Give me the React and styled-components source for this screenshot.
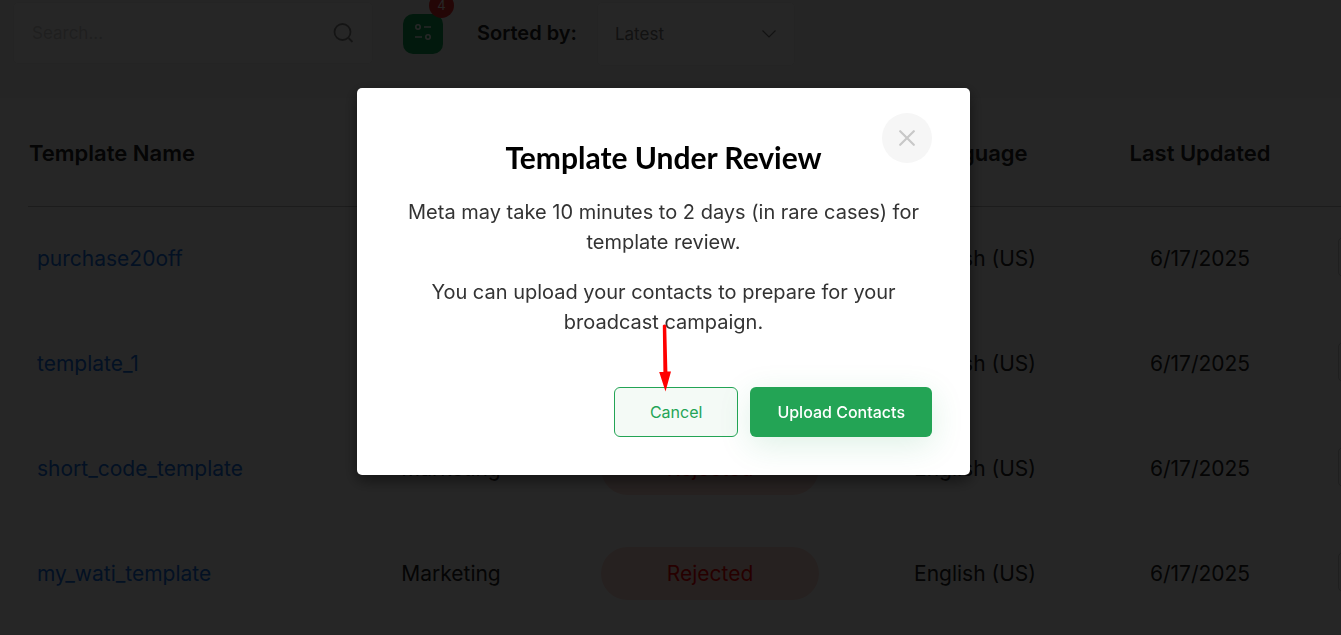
//Estilos
import styled, { createGlobalStyle } from "styled-components";

const templates = [
  { name: "purchase20off" },
  { name: "template_1" },
  { name: "short_code_template", category: "Marketing", status: "Rejected" },
  { name: "my_wati_template", category: "Marketing", status: "Rejected" },
];

const App = () => {
  return (
    <>
      <GlobalStyle />
      <Page>
        <Toolbar>
          <SearchBox>
            <input type="text" placeholder="Search..." aria-label="Search" />
            <svg width="22" height="22" viewBox="0 0 22 22" fill="none">
              <circle cx="10.5" cy="10" r="8" />
              <path d="M16.5 16l4 4" />
            </svg>
          </SearchBox>

          <FilterButton type="button" aria-label="Filters">
            <svg width="18" height="16" viewBox="0 0 18 16" fill="none">
              <circle cx="4" cy="3" r="2.2" />
              <path d="M10 3h7M1 13h7" />
              <circle cx="14" cy="13" r="2.2" />
            </svg>
            <Badge>4</Badge>
          </FilterButton>

          <SortLabel htmlFor="sort">Sorted by:</SortLabel>
          <SelectBox>
            <select id="sort" defaultValue="Latest">
              <option>Latest</option>
            </select>
            <svg width="16" height="10" viewBox="0 0 16 10" fill="none">
              <path d="M1.5 1.5l6.5 6.5 6.5-6.5" />
            </svg>
          </SelectBox>
        </Toolbar>

        <TableCard>
          <Table>
            <colgroup>
              <Col width="317px" />
              <Col width="212px" />
              <Col width="306px" />
              <Col width="224px" />
              <Col width="226px" />
              <Col />
            </colgroup>
            <thead>
              <tr>
                <HeadCell align="left">Template Name</HeadCell>
                <HeadCell />
                <HeadCell />
                <HeadCell>Language</HeadCell>
                <HeadCell>Last Updated</HeadCell>
                <HeadCell />
              </tr>
            </thead>
            <tbody>
              {templates.map((item) => (
                <tr key={item.name}>
                  <Cell align="left">
                    <NameLink href="#">{item.name}</NameLink>
                  </Cell>
                  <Cell>{item.category}</Cell>
                  <Cell>{item.status && <Status>{item.status}</Status>}</Cell>
                  <Cell>English (US)</Cell>
                  <Cell>6/17/2025</Cell>
                  <Cell align="left">
                    <ActionButton type="button" aria-label="Actions" />
                  </Cell>
                </tr>
              ))}
            </tbody>
          </Table>
        </TableCard>
      </Page>

      <Overlay>
        <Modal role="dialog" aria-modal="true" aria-labelledby="modal-title">
          <CloseButton type="button" aria-label="Close">
            <svg width="16" height="16" viewBox="0 0 16 16" fill="none">
              <path d="M1.2 1.2l13.6 13.6M14.8 1.2L1.2 14.8" />
            </svg>
          </CloseButton>
          <h2 id="modal-title">Template Under Review</h2>
          <p>
            Meta may take 10 minutes to 2 days (in rare cases) for template
            review.
          </p>
          <p>
            You can upload your contacts to prepare for your broadcast campaign.
          </p>
          <Actions>
            <Button type="button">
              Cancel
              <Arrow width="14" height="68" viewBox="0 0 14 68">
                <path d="M4.8 1.5Q6.5-.5 8.2 1.5L9.4 47.5H13L7.5 67.5L1.2 48H5.4Z" />
              </Arrow>
            </Button>
            <Button type="button" $primary>
              Upload Contacts
            </Button>
          </Actions>
        </Modal>
      </Overlay>
    </>
  );
};

export default App;

const GlobalStyle = createGlobalStyle`
  * {
    box-sizing: border-box;
  }

  body {
    margin: 0;
    background: #f8f8f8;
    color: #222;
    font-family: Inter, "Liberation Sans", sans-serif;
    overflow: hidden;
  }

  input,
  select,
  button {
    font-family: inherit;
  }
`;

const Page = styled.main`
  width: 100%;
`;

const Toolbar = styled.div`
  height: 98px;
  display: flex;
  align-items: flex-start;
  padding: 2px 13px 0;
`;

const SearchBox = styled.div`
  width: 360px;
  height: 62px;
  display: flex;
  align-items: center;
  padding: 0 18px;
  margin-right: 30px;
  background: #fff;
  border: 1px solid #f0f0f0;
  border-radius: 5px;

  input {
    flex: 1;
    min-width: 0;
    padding: 0;
    border: none;
    outline: none;
    background: none;
    font-size: 17px;
  }

  input::placeholder {
    color: #d0d0d0;
    opacity: 1;
  }

  svg {
    stroke: #888;
    stroke-width: 1.8;
  }
`;

const FilterButton = styled.button`
  position: relative;
  width: 40px;
  height: 40px;
  display: flex;
  align-items: flex-start;
  justify-content: center;
  margin: 12px 34px 0 0;
  padding: 10px 0 0;
  border: none;
  border-radius: 10px;
  background: #0fa958;

  svg {
    stroke: #fff;
    stroke-width: 1.6;
  }
`;

const Badge = styled.span`
  position: absolute;
  top: -21px;
  right: -11px;
  width: 25px;
  height: 25px;
  border-radius: 50%;
  background: #f02d2d;
  color: #fff;
  font-size: 13px;
  line-height: 25px;
  text-align: center;
`;

const SortLabel = styled.label`
  margin-right: 20px;
  font-size: 20px;
  font-weight: 600;
  line-height: 62px;
`;

const SelectBox = styled.div`
  width: 198px;
  height: 64px;
  display: flex;
  align-items: center;
  padding: 0 17px;
  background: #fff;
  border: 1px solid #f0f0f0;
  border-radius: 5px;

  select {
    flex: 1;
    padding: 0;
    border: none;
    appearance: none;
    background: none;
    color: #777;
    font-size: 17px;
  }

  svg {
    stroke: #777;
    stroke-width: 1.2;
  }
`;

const TableCard = styled.section`
  padding-left: 28px;
  padding-bottom: 8px;
  background: #fff;
  overflow: hidden;
`;

const Table = styled.table`
  width: 100%;
  min-width: 1400px;
  table-layout: fixed;
  border-collapse: collapse;
`;

const Col = styled.col`
  width: ${(props) => props.width || "auto"};
`;

const HeadCell = styled.th`
  height: 108px;
  padding: 3px 1px 0;
  border-bottom: 1px solid #b8b8b8;
  font-size: 22px;
  font-weight: 600;
  text-align: ${(props) => props.align || "center"};
`;

const Cell = styled.td`
  height: 105px;
  padding: 0 9px;
  font-size: 21px;
  text-align: ${(props) => props.align || "center"};
`;

const NameLink = styled.a`
  color: #1470e8;
  text-decoration: none;
`;

const Status = styled.span`
  display: inline-block;
  width: 218px;
  border-radius: 27px;
  background: #ffdcd6;
  color: #f00;
  line-height: 53px;
`;

const ActionButton = styled.button`
  width: 48px;
  height: 40px;
  margin-left: 16px;
  border: 1px solid #ccc;
  border-radius: 5px;
  background: #fff;
`;

const Overlay = styled.div`
  position: fixed;
  inset: 0;
  display: flex;
  align-items: flex-start;
  justify-content: center;
  padding: 88px 14px 0 0;
  background: rgba(0, 0, 0, 0.85);
`;

const Modal = styled.div`
  position: relative;
  width: 613px;
  display: flex;
  flex-direction: column;
  gap: 20px;
  padding: 50px 38px 38px;
  border-radius: 5px;
  background: #fff;
  box-shadow: 0 5px 15px rgba(0, 0, 0, 0.5);
  text-align: center;

  h2 {
    margin: 0;
    color: #000;
    font-family: Lato, sans-serif;
    font-size: 30px;
    font-weight: 700;
    line-height: 39px;
  }

  p {
    margin: 0;
    color: #333;
    font-size: 20px;
    line-height: 30px;
  }
`;

const CloseButton = styled.button`
  position: absolute;
  top: 25px;
  right: 38px;
  width: 50px;
  height: 50px;
  display: flex;
  align-items: center;
  justify-content: center;
  padding: 0;
  border: none;
  border-radius: 50%;
  background: #f6f6f6;

  svg {
    stroke: #c8c8c8;
    stroke-width: 2.2;
    stroke-linecap: round;
  }
`;

const Actions = styled.div`
  display: flex;
  justify-content: flex-end;
  gap: 12px;
  margin-top: 30px;
`;

const Button = styled.button`
  position: relative;
  height: 50px;
  padding: 0 ${(props) => (props.$primary ? "27px" : "35px")};
  border: ${(props) => (props.$primary ? "none" : "1px solid #23a455")};
  border-radius: 6px;
  background: ${(props) => (props.$primary ? "#23a455" : "#f4faf6")};
  color: ${(props) => (props.$primary ? "#fff" : "#23a455")};
  box-shadow: ${(props) =>
    props.$primary ? "0 8px 32px rgba(35, 164, 85, 0.15)" : "none"};
  font-size: 16px;
  font-weight: ${(props) => (props.$primary ? 500 : 400)};
`;

const Arrow = styled.svg`
  position: absolute;
  left: 43px;
  bottom: 44px;
  fill: #f00;
`;
